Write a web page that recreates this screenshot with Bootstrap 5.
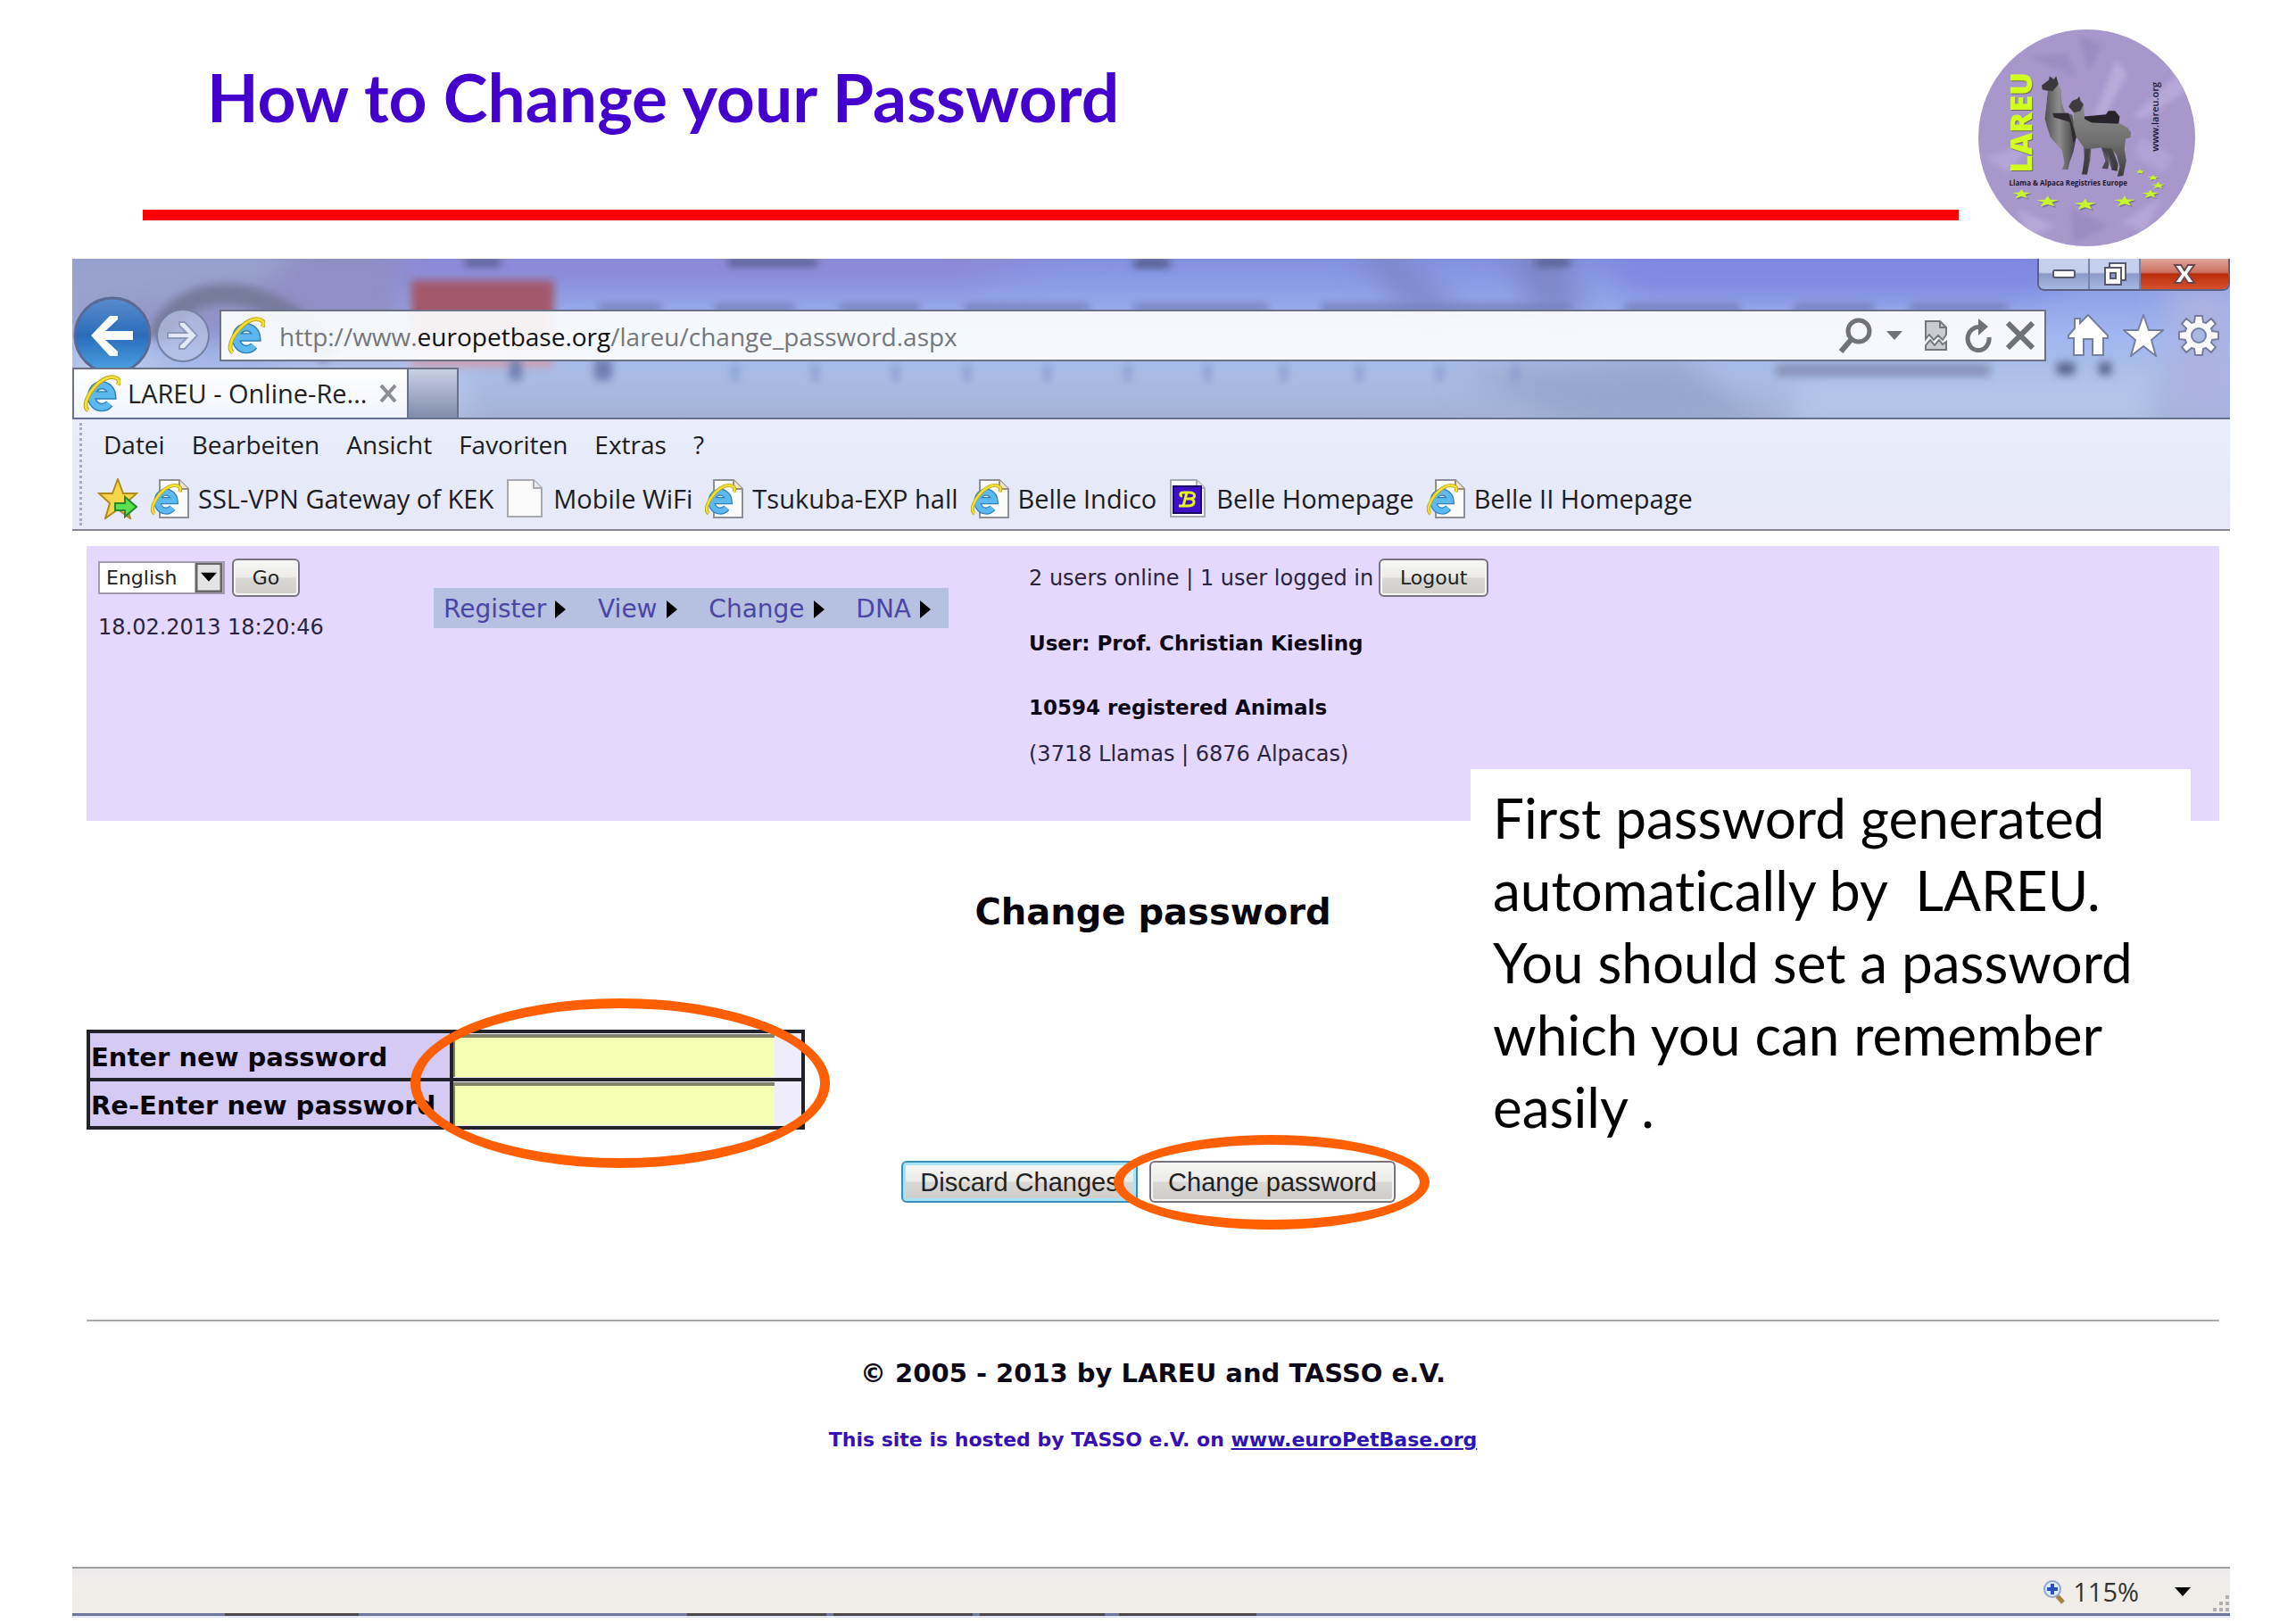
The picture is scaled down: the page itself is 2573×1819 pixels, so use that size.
<!DOCTYPE html>
<html lang="en">
<head>
<meta charset="utf-8">
<meta name="viewport" content="width=device-width, initial-scale=1">
<title>How to Change your Password</title>
<link rel="stylesheet" href="https://cdn.jsdelivr.net/npm/bootstrap@5.3.0/dist/css/bootstrap.min.css">
<style>
  body { background: #fff; color: #0d0818; font-family: "DejaVu Sans", sans-serif; font-size: 22px; line-height: 40px; }
  svg { display: block; flex: none; }

  /* slide heading */
  .slide-head { padding: 33px 113px 14px 160px; gap: 22px; }
  .slide-title { font: 700 75px/90px Lato, sans-serif; color: #4400cc; margin: 30px 0 82px 72px; }
  .slide-rule { height: 12px; background: #ff0000; }

  /* browser window */
  .win { margin: 0 74px 0 81px; font-family: "Open Sans", "Noto Sans", sans-serif; }
  .glass { position: relative; overflow: hidden; border-bottom: 2px solid #66708f; background: #9fb0e4; }
  .glass-art { position: absolute; inset: 0; width: 100%; height: 100%; }
  .glass-part { position: relative; }
  .caption-set { height: 36px; border: 2px solid #5c6080; border-top: 0; border-radius: 0 0 8px 8px; overflow: hidden; }
  .cap-btn { border: 0; border-right: 2px solid #7a82a8; padding: 0; width: 57px; height: 34px; display: grid; place-items: center;
    background: linear-gradient(#c3cfec 0 45%, #8b9ac8 50%, #a8b8e4); }
  .cap-close { width: 98px; border-right: 0; background: linear-gradient(#dfa59c, #cc6f60 45%, #b92c08 50%, #d8502f); }
  .nav-line { height: 86px; padding: 14px 12px 0 1px; }
  .plain-btn { border: 0; background: none; padding: 0; }
  .address { height: 58px; border: 2px solid #6b7288; background: rgba(252,254,255,.92); margin-left: 10px; padding: 0 11px 0 7px; }
  .address-text { border: 0; background: none; font-size: 28px; line-height: 40px; padding-top: 2px; color: #74777c; }
  .address-text b { font-weight: 400; color: #111; }
  .tab-line { height: 56px; }
  .tab-on { width: 377px; background: linear-gradient(#fff, #f0f4ff); border: 2px solid #6b7288; border-bottom: 0; padding: 0 10px 0 10px; font-size: 29px; color: #222; }
  .tab-new { width: 56px; border: 2px solid #6b7288; border-left: 0; border-bottom: 0; background: linear-gradient(#c8d0e4, #808cab); }
  .bars { background: linear-gradient(#e9edfb, #e6eaf8 60%, #e8e8f8); border-bottom: 2px solid #86868f; position: relative; color: #1c1c24; font-size: 28px; }
  .bars::before { content: ""; position: absolute; left: 8px; top: 4px; bottom: 4px; border-left: 3px dotted #a9adb9; }
  .bars a { color: inherit; text-decoration: none; white-space: nowrap; }
  .menu-line { height: 55px; padding-left: 35px; gap: 30px; }
  .fav-line { height: 68px; padding-left: 28px; gap: 13px; font-size: 29px; }
  .fav-line a { display: flex; align-items: center; gap: 10px; }

  /* web site inside the window */
  .site { position: relative; padding: 17px 12px 122px 16px; font-family: "DejaVu Sans", Verdana, sans-serif; }
  .site-head { display: grid; grid-template-columns: 389fr 667fr 1334fr; height: 308px; background: #e4d8ff; color: #2b2440; font-size: 24px; }
  .site-head b { color: #0d0818; font-size: 23px; }
  .old-btn { font: 22px/30px "DejaVu Sans", sans-serif; color: #222; border: 2px solid #77737f; border-radius: 6px; height: 43px; padding: 0;
    background: linear-gradient(#f6f6f4, #ecebe8 48%, #d9d7d3 52%, #cfccca); box-shadow: inset 0 0 0 2px #f6f6f6; }
  .btn-go { width: 76px; }
  .btn-out { width: 123px; margin-left: 6px; }
  .lang-cell { padding-left: 13px; }
  .lang { width: 142px; height: 37px; border: 2px solid #a09bb0; border-radius: 0; padding: 0 0 0 7px; font: 22px/32px "DejaVu Sans", sans-serif; color: #222;
    background: #fff url("data:image/svg+xml,%3Csvg xmlns='http://www.w3.org/2000/svg' viewBox='0 0 32 34'%3E%3Cpath fill='%23e4e4e4' stroke='%23666' stroke-width='3' d='M2 1h28v31H2z'/%3E%3Cpath d='M7 11h18l-9 10z'/%3E%3C/svg%3E") right center / 32px 34px no-repeat; }
  .stamp { margin-top: 14px; }
  .site-nav { height: 45px; margin-top: 47px; width: 577px; background: #b6c0e0; padding: 3px 20px 0 11px; font-size: 28px; }
  .site-nav a { color: #4b46a6; text-decoration: none; display: flex; align-items: center; gap: 10px; }
  .who { padding-top: 14px; white-space: nowrap; }
  .who-name { margin: 32px 0; }
  .who-herd { margin-top: 12px; }
  .page-title { font: 700 40px/60px "DejaVu Sans", sans-serif; color: #08040c; margin: 72px 0 102px; text-align: center; }
  .pw-grid { border-collapse: collapse; position: relative; }
  .pw-grid th, .pw-grid td { border: 4px solid #22222a; height: 54px; padding: 0; }
  .pw-grid th { width: 407px; background: #d4caf4; padding: 3px 0 0 1px; font-size: 29px; line-height: 40px; white-space: nowrap; color: #08040c; }
  .pw-grid td { width: 394px; background: #efecfe; }
  .pw-field { width: 360px; height: 48px; border: 0 solid #80826e; border-width: 4px 0 0 2px; border-radius: 0; background: #f5ffb3; }
  .pw-field:focus { background: #f5ffb3; box-shadow: none; }
  .ring { position: absolute; border: 11px solid #ff5f00; border-radius: 50%; pointer-events: none; }
  .form-wrap { position: relative; }
  .ring-a { left: 363px; top: -35px; width: 470px; height: 190px; }
  .ring-b { left: -40px; top: -29px; width: 354px; height: 106px; }
  .acts { margin-top: 35px; gap: 13px; padding-right: 10px; }
  .act { font: 29px/40px "Liberation Sans", Arial, sans-serif; height: 47px; padding: 0; width: 276px; }
  .act-discard { width: 265px; border-color: #3c8db8; box-shadow: inset 0 0 0 3px #a6e2f8; }
  .foot-rule { height: 2px; background: #a9a9a9; margin-top: 131px; }
  .foot-copy { font-size: 29px; font-weight: 700; margin: 38px 0 35px; text-align: center; }
  .foot-host { font-weight: 700; color: #3610b4; margin: 0; text-align: center; }
  .foot-host a { color: #2b14b4; }
  .note { position: absolute; right: 44px; top: 267px; width: 807px; height: 450px; margin: 0; padding: 14px 25px; background: #fff; color: #000;
    font: 62px/81px Lato, sans-serif; font-variant-ligatures: none; white-space: pre-line; }
  .status { height: 52px; border-top: 2px solid #a09f9e; background: linear-gradient(#ece9ec, #f0edea 30%, #f0ede8); color: #333; font-size: 29px; padding-top: 2px; }
  .status-edge { height: 5px; border-top: 3px solid #6d7698; background: #dfe5f4; padding-left: 171px; }
  .task { height: 3px; margin-top: -3px; background: #4a4648; }
</style>
<script src="https://cdn.jsdelivr.net/npm/bootstrap@5.3.0/dist/js/bootstrap.bundle.min.js"></script>
</head>
<body>

<svg width="0" height="0" class="position-absolute" aria-hidden="true">
  <defs>
    <linearGradient id="blue" x1="0" y1="0" x2="0" y2="1"><stop offset="0" stop-color="#7fd4f8"/><stop offset="1" stop-color="#2b8fd6"/></linearGradient>
    <symbol id="ie" viewBox="0 0 44 46">
      <path d="M11 25h23a12 13 0 1 0-3 10" fill="none" stroke="#2f7fb8" stroke-width="10"/>
      <path d="M11 25h23a12 13 0 1 0-3 10" fill="none" stroke="#5cb8ee" stroke-width="7"/>
      <path d="M6 43C-6 34 24-6 41 6c2 2 1 5 0 7" fill="none" stroke="#b9a514" stroke-width="5"/>
      <path d="M6 43C-6 34 24-6 41 6c2 2 1 5 0 7" fill="none" stroke="#f2de38" stroke-width="3"/>
    </symbol>
    <symbol id="sheet" viewBox="0 0 44 46">
      <path d="M3 2h29l9 9v32H3z" fill="#fbfbfb" stroke="#a9a9b0" stroke-width="2"/>
      <path d="M32 2v9h9" fill="#e8e8e8" stroke="#a9a9b0" stroke-width="2"/>
    </symbol>
    <symbol id="iepage" viewBox="0 0 44 46">
      <path d="M11 2h22l10 10v32H11z" fill="#fbfbfb" stroke="#8f8f98" stroke-width="2"/>
      <path d="M33 2v10h10" fill="#f3e6c8" stroke="#9c8f80" stroke-width="2"/>
      <use href="#ie" x="0" y="5" width="36" height="37"/>
    </symbol>
    <symbol id="eustar" viewBox="-36 -20 72 40" overflow="visible">
      <path d="M2 -16L10 -5 36 -4 15 4 24 18 2 10 -22 18 -12 4 -34 -3 -7 -5z" fill="#5b5a80" opacity=".6" transform="translate(3 3)"/>
      <path d="M0 -18L8 -6 34 -5 13 3 22 16 0 9 -24 16 -14 3 -36 -4 -9 -6z" fill="#c8f52c"/>
    </symbol>
  </defs>
</svg>

<header class="slide-head d-flex align-items-start">
  <div class="flex-grow-1">
    <h1 class="slide-title">How to Change your Password</h1>
    <div class="slide-rule"></div>
  </div>
  <svg width="243" height="243" viewBox="80 38 730 730" role="img" aria-label="LAREU">
    <defs>
      <clipPath id="disc"><circle cx="445" cy="403" r="365"/></clipPath>
      <filter id="soft"><feGaussianBlur stdDeviation="9"/></filter>
      <linearGradient id="wool" x1="0" y1="0" x2="1" y2="0"><stop offset="0" stop-color="#444"/><stop offset=".5" stop-color="#8d8d8d"/><stop offset="1" stop-color="#3c3c3c"/></linearGradient>
      <linearGradient id="wool2" x1="0" y1="0" x2="0" y2="1"><stop offset="0" stop-color="#929292"/><stop offset=".55" stop-color="#707070"/><stop offset="1" stop-color="#3c3c3c"/></linearGradient>
    </defs>
    <circle cx="445" cy="403" r="365" fill="#a797cb"/>
    <g clip-path="url(#disc)"><g filter="url(#soft)">
      <path d="M545 140L470 330 500 340 580 190z" fill="#b9abd9"/>
      <path d="M760 180L600 330 640 340 800 230z" fill="#b6a8d8"/>
      <path d="M250 130L410 200 380 120z" fill="#9c8cc2"/>
      <path d="M420 60L500 90 450 180z" fill="#9a8bc3"/>
      <path d="M100 470L260 420 180 520z" fill="#b3a5d5"/>
      <path d="M630 400L740 470 700 520 600 460z" fill="#b1a3d4"/>
      <path d="M210 640L340 700 250 740z" fill="#b5a7d6"/>
      <path d="M390 640L520 700 400 760z" fill="#9a8bc3"/>
      <path d="M560 690L700 600 640 720z" fill="#b4a6d5"/>
    </g></g>
    <text transform="translate(263 524) rotate(-90)" font-family="Open Sans, sans-serif" font-weight="800" font-size="103" fill="#6c6c50">LAREU</text>
    <text transform="translate(259 521) rotate(-90)" font-family="Open Sans, sans-serif" font-weight="800" font-size="103" fill="#d2ff1e">LAREU</text>
    <text transform="translate(686 449) rotate(-90)" font-family="Open Sans, sans-serif" font-weight="600" font-size="33" fill="#1d1830">www.lareu.org</text>
    <text x="184" y="563" font-family="Open Sans, sans-serif" font-weight="700" font-size="24" fill="#1d1830">Llama &amp; Alpaca Registries Europe</text>
    <path d="M430 332L510 324 518 312 540 312 556 332 552 358 440 362z" fill="#26242a"/>
    <path d="M294 228L318 212 320 196 334 206 342 196 346 218 357 236 362 290 372 318 396 326 410 400 400 450 386 490 382 510 362 510 370 488 362 446 322 400 304 340 314 246 296 240z" fill="url(#wool)"/>
    <path d="M294 226L318 208 320 196 334 206 342 196 350 222 330 246 296 240z" fill="#3a383c"/>
    <path d="M330 320L384 320 410 400 400 420 388 350 334 334z" fill="#2d2b30"/>
    <path d="M384 298L396 278 412 272 420 264 424 278 434 290 438 340 462 352 560 356 584 370 594 386 592 402 576 406 572 440 578 480 568 530 548 534 556 500 546 462 534 446 550 490 548 514 530 512 528 480 510 440 520 490 516 508 496 506 508 480 494 436 460 440 456 480 446 526 428 526 438 480 434 434 410 400 400 360 402 316z" fill="url(#wool2)"/>
    <path d="M384 298L396 278 412 272 420 264 424 278 434 290 424 312 402 318z" fill="#3d3b3f"/>
    <path d="M494 436L530 440 550 490 548 514 530 512 516 470z M440 440L456 440 446 526 430 524z" fill="#38363b" opacity=".7"/>
    <use href="#eustar" x="193" y="574" width="66" height="36"/>
    <use href="#eustar" x="276" y="596" width="76" height="42"/>
    <use href="#eustar" x="402" y="606" width="76" height="42"/>
    <use href="#eustar" x="536" y="596" width="74" height="40"/>
    <use href="#eustar" x="628" y="576" width="64" height="32"/>
    <use href="#eustar" x="660" y="550" width="52" height="26"/>
    <use href="#eustar" x="646" y="526" width="46" height="22"/>
    <use href="#eustar" x="606" y="508" width="38" height="18"/>
  </svg>
</header>

<main class="win">
  <div class="glass">
    <svg class="glass-art" viewBox="0 0 2419 178" preserveAspectRatio="none" aria-hidden="true">
      <defs>
        <linearGradient id="sky" x1="0" y1="0" x2="0" y2="1"><stop offset="0" stop-color="#8390df"/><stop offset=".5" stop-color="#a2b8f1"/><stop offset=".75" stop-color="#a9bbe4"/><stop offset="1" stop-color="#a5b2d4"/></linearGradient>
        <filter id="haze" x="-10%" y="-10%" width="120%" height="120%"><feGaussianBlur stdDeviation="5"/></filter>
        <filter id="haze2" x="-40%" y="-40%" width="180%" height="180%"><feGaussianBlur stdDeviation="16"/></filter>
      </defs>
      <rect width="2419" height="178" fill="url(#sky)"/>
      <g filter="url(#haze2)">
        <path d="M-20-20H372V100H260L-20 80z" fill="#908fc6"/>
        <path d="M-20-20H260L200 40 60 60-20 80z" fill="#98a2cc"/>
        <path d="M370-20H1150L1000 30H370z" fill="#8d8ad8"/>
        <path d="M1430-20L1500 60H1560L1470-20z M1600-20L1640 60H1700L1660-20z" fill="#7d86c8"/>
        <path d="M1700-20H2300L2200 40H1750z" fill="#8088e2"/>
        <path d="M0 90H90V178H0z M240 120H440V178H240z" fill="#b9c7ea"/>
        <path d="M1930 130H2330V190H1930z" fill="#b2c6ea"/>
        <path d="M2350 30H2430V178H2350z" fill="#acb2e2"/>
        <path d="M1550 130L1700 190H1900L1800 110z" fill="#97a6cc"/>
      </g>
      <g filter="url(#haze)">
        <path d="M95 90C120 20 230 20 290 110" fill="none" stroke="#777b9c" stroke-width="24"/>
        <rect x="380" y="24" width="160" height="74" fill="#a3596c"/>
        <rect x="380" y="98" width="160" height="24" fill="#c6a3b8"/>
        <path d="M440 0h40v8h-40z M735 0h100v8h-100z M1190 0h40v10h-40z M1640 0h40v8h-40z" fill="#4f5685"/>
        <path d="M590 50h70v10h-70z M720 50h90v10h-90z M860 50h90v10h-90z M1000 50h140v10h-140z M1190 50h150v10h-150z M1400 50h280v10h-280z M1740 50h130v10h-130z M1930 50h90v10h-90z M2060 50h110v10h-110z" fill="#7681bd"/>
        <path d="M490 112h14v24h-14z M585 112h20v24h-20z" fill="#6e7eb0"/>
        <path d="M1910 118h240v14h-240z" fill="#8792b8"/>
        <path d="M2225 116h20v14h-20z M2272 116h14v14h-14z" fill="#59648e"/>
        <path d="M740 118h6v20h-6z M830 118h6v20h-6z M920 118h6v20h-6z M1000 118h6v20h-6z M1090 118h6v20h-6z M1180 118h6v20h-6z M1270 118h6v20h-6z M1355 118h6v20h-6z M1440 118h6v20h-6z M1530 118h6v20h-6z M1615 118h6v20h-6z" fill="#8296ca"/>
      </g>
    </svg>

    <div class="glass-part d-flex justify-content-end">
      <div class="caption-set d-flex">
        <button class="cap-btn" type="button" aria-label="Minimize"><svg width="26" height="12"><rect x="1" y="2" width="24" height="8" rx="2" fill="#fff" stroke="#555a70" stroke-width="2"/></svg></button>
        <button class="cap-btn" type="button" aria-label="Restore"><svg width="28" height="28"><path d="M8 2h18v19h-5v5H3V7h5z" fill="#fff" stroke="#555a70" stroke-width="2"/><path d="M8 7h13v14" fill="none" stroke="#555a70" stroke-width="2"/><rect x="9" y="13" width="6" height="6" fill="#8fa0d0" stroke="#555a70" stroke-width="2"/></svg></button>
        <button class="cap-btn cap-close" type="button" aria-label="Close"><svg width="26" height="26"><path d="M2 3h7l4 6 4-6h7l-7 10 7 10h-7l-4-6-4 6H2l7-10z" fill="#fff" stroke="#6a4a50" stroke-width="2"/></svg></button>
      </div>
    </div>

    <div class="glass-part nav-line d-flex align-items-center">
      <button class="plain-btn" type="button" aria-label="Back"><svg width="88" height="88"><defs><linearGradient id="bk" x1="0" y1="0" x2="0" y2="1"><stop offset="0" stop-color="#5a8ccc"/><stop offset=".5" stop-color="#2a6cba"/><stop offset="1" stop-color="#4da4e4"/></linearGradient></defs><circle cx="44" cy="44" r="42" fill="url(#bk)" stroke="#5a6a94" stroke-width="3"/><path d="M20 44L41 22h9v4L36 39h31v10H36l14 13v5h-9z" fill="#fff"/></svg></button>
      <button class="plain-btn ms-1" type="button" aria-label="Forward"><svg width="62" height="62"><circle cx="31" cy="31" r="29" fill="#b9c5e6" fill-opacity=".7" stroke="#7480a4" stroke-width="2"/><path d="M47 31L33 16h-6v4l8 8H14v6h21l-8 8v4h6z" fill="#e2e9f8" stroke="#8c98ba" stroke-width="2"/></svg></button>
      <div class="address d-flex align-items-center flex-grow-1">
        <svg width="42" height="46"><use href="#ie"/></svg>
        <div class="address-text flex-grow-1 ps-3">http://www.<b>europetbase.org</b>/lareu/change_password.aspx</div>
        <button class="plain-btn" type="button" aria-label="Search"><svg width="38" height="40"><circle cx="23" cy="15" r="12" fill="none" stroke="#6f7377" stroke-width="5"/><path d="M15 24L3 38" stroke="#6f7377" stroke-width="6"/></svg></button>
        <button class="plain-btn mx-3" type="button" aria-label="Search options"><svg width="18" height="10"><path d="M0 0h18l-9 10z" fill="#6f7377"/></svg></button>
        <button class="plain-btn ms-2" type="button" aria-label="Compatibility view"><svg width="28" height="34"><path d="M2 1h16l7 7v8l-4 6-5-5-5 5-5-6-4 5z M2 33v-5l5-6 5 6 5-6 4 5 4-3v9z" fill="#c9ccd0" stroke="#74787c" stroke-width="2"/><path d="M18 1v7h7" fill="none" stroke="#74787c" stroke-width="2"/></svg></button>
        <button class="plain-btn mx-3" type="button" aria-label="Refresh"><svg width="32" height="38"><path d="M20 10a12 13 0 1 0 9 11" fill="none" stroke="#6f7377" stroke-width="5"/><path d="M17 0l11 9-11 10z" fill="#6f7377"/></svg></button>
        <button class="plain-btn" type="button" aria-label="Stop"><svg width="32" height="32"><path d="M2 2l28 28M30 2L2 30" stroke="#6f7377" stroke-width="6"/></svg></button>
      </div>
      <button class="plain-btn ms-4" type="button" aria-label="Home"><svg width="46" height="48"><path d="M23 1L45 24v3h-5v19H28V28H18v18H7V27H1v-3L8 16V5h6v5z" fill="#fff" stroke="#76809e" stroke-width="2"/></svg></button>
      <button class="plain-btn mx-3" type="button" aria-label="Favorites"><svg width="46" height="48"><path d="M23 1l6 17h16L32 29l5 18-14-11L9 47l5-18L1 18h16z" fill="#fff" stroke="#76809e" stroke-width="2"/></svg></button>
      <button class="plain-btn" type="button" aria-label="Tools"><svg width="46" height="48" viewBox="-23 -24 46 48"><g fill="#fff" stroke="#76809e" stroke-width="2"><path d="M-5-15l1-7h8l1 7a16 16 0 0 1 3 1l6-5 5 6-5 5a16 16 0 0 1 1 3l7 1v8l-7 1a16 16 0 0 1-1 3l5 5-5 6-6-5a16 16 0 0 1-3 1l-1 7h-8l-1-7a16 16 0 0 1-3-1l-6 5-5-6 5-5a16 16 0 0 1-1-3l-7-1v-8l7-1a16 16 0 0 1 1-3l-5-5 5-6 6 5z"/><circle r="8" fill="#a9b6e2"/></g></svg></button>
    </div>

    <div class="glass-part tab-line d-flex">
      <div class="tab-on d-flex align-items-center">
        <svg width="42" height="46"><use href="#ie"/></svg>
        <span class="flex-grow-1 ps-2 text-nowrap">LAREU - Online-Re...</span>
        <button class="plain-btn" type="button" aria-label="Close tab"><svg width="22" height="20"><path d="M3 1l16 18M19 1L3 19" stroke="#8d8d93" stroke-width="4"/></svg></button>
      </div>
      <button class="tab-new p-0" type="button" aria-label="New tab"></button>
    </div>
  </div>

  <div class="bars">
    <nav class="menu-line d-flex align-items-center" aria-label="Menu">
      <a href="#">Datei</a><a href="#">Bearbeiten</a><a href="#">Ansicht</a><a href="#">Favoriten</a><a href="#">Extras</a><a href="#">?</a>
    </nav>
    <nav class="fav-line d-flex align-items-center" aria-label="Favorites bar">
      <a href="#" aria-label="Add to favorites"><svg width="46" height="46"><path d="M23 1l6 16h15L32 28l5 17-14-10L9 45l5-17L2 17h15z" fill="#f6d648" stroke="#b08a20" stroke-width="2"/><path d="M20 28h11v-7l13 11-13 11v-7H20z" fill="#59e04e" stroke="#26882a" stroke-width="2"/></svg></a>
      <a href="#"><svg width="44" height="46"><use href="#iepage"/></svg>SSL-VPN Gateway of KEK</a>
      <a href="#"><svg width="44" height="46"><use href="#sheet"/></svg>Mobile WiFi</a>
      <a href="#"><svg width="44" height="46"><use href="#iepage"/></svg>Tsukuba-EXP hall</a>
      <a href="#"><svg width="44" height="46"><use href="#iepage"/></svg>Belle Indico</a>
      <a href="#"><svg width="44" height="46"><use href="#sheet"/><rect x="6" y="9" width="31" height="30" fill="#3f10c8" stroke="#1c0a60" stroke-width="2"/><path d="M12 31h10c9 0 9-8 2-8 8 0 7-7 0-7h-7c-4 0-4 4-1 4M21 16l-4 15M20 23h5" fill="none" stroke="#e6f01e" stroke-width="3"/></svg>Belle Homepage</a>
      <a href="#"><svg width="44" height="46"><use href="#iepage"/></svg>Belle II Homepage</a>
    </nav>
  </div>

  <div class="site">
    <section class="site-head">
      <div class="lang-cell">
        <div class="d-flex align-items-center who">
          <select class="form-select lang" aria-label="Language"><option>English</option></select>
          <button class="btn old-btn btn-go ms-2" type="button">Go</button>
        </div>
        <div class="stamp">18.02.2013 18:20:46</div>
      </div>
      <div>
        <nav class="site-nav d-flex align-items-center justify-content-between" aria-label="Site">
          <a href="#">Register<svg width="12" height="20"><path d="M0 0l12 10L0 20z"/></svg></a>
          <a href="#">View<svg width="12" height="20"><path d="M0 0l12 10L0 20z"/></svg></a>
          <a href="#">Change<svg width="12" height="20"><path d="M0 0l12 10L0 20z"/></svg></a>
          <a href="#">DNA<svg width="12" height="20"><path d="M0 0l12 10L0 20z"/></svg></a>
        </nav>
      </div>
      <div class="who">
        <div class="d-flex align-items-center">2 users online | 1 user logged in<button class="btn old-btn btn-out" type="button">Logout</button></div>
        <div class="who-name"><b>User: Prof. Christian Kiesling</b></div>
        <div><b>10594 registered Animals</b></div>
        <div class="who-herd">(3718 Llamas | 6876 Alpacas)</div>
      </div>
    </section>

    <h2 class="page-title">Change password</h2>

    <form>
      <div class="form-wrap">
        <table class="pw-grid">
          <tr><th scope="row"><label for="pw1">Enter new password</label></th><td><input class="form-control pw-field" id="pw1" type="password"></td></tr>
          <tr><th scope="row"><label for="pw2">Re-Enter new password</label></th><td><input class="form-control pw-field" id="pw2" type="password"></td></tr>
        </table>
        <div class="ring ring-a"></div>
      </div>
      <div class="acts d-flex justify-content-center">
        <button class="btn old-btn act act-discard" type="reset">Discard Changes</button>
        <div class="position-relative">
          <button class="btn old-btn act" type="button">Change password</button>
          <div class="ring ring-b"></div>
        </div>
      </div>
    </form>

    <div class="foot-rule"></div>
    <p class="foot-copy">© 2005 - 2013 by LAREU and TASSO e.V.</p>
    <p class="foot-host">This site is hosted by TASSO e.V. on <a href="#">www.euroPetBase.org</a></p>

    <p class="note">First password generated
automatically by&nbsp; LAREU.
You should set a password
which you can remember
easily .</p>
  </div>

  <div class="status d-flex align-items-center justify-content-end">
    <svg width="26" height="28"><path d="M15 17l8 9" stroke="#a5834c" stroke-width="5"/><circle cx="11" cy="11" r="9" fill="#dfe9fb" stroke="#8fa6d4" stroke-width="2"/><path d="M11 5v12M5 11h12" stroke="#2a50c4" stroke-width="4"/></svg>
    <span class="ps-2">115%</span>
    <svg class="ms-4 ps-3 me-4" width="34" height="10"><path d="M0 0h18l-9 10z"/></svg>
    <svg width="20" height="22" class="align-self-end"><path d="M1 18h4M8 18h4M15 18h4M8 11h4M15 11h4M15 4h4" stroke="#b0aeb0" stroke-width="4"/></svg>
  </div>
  <div class="status-edge d-flex gap-2">
    <div class="task" style="width:150px"></div><div style="width:352px"></div>
    <div class="task" style="width:156px"></div><div class="task" style="width:156px"></div><div class="task" style="width:140px"></div><div></div><div class="task" style="width:154px"></div>
  </div>
</main>
</body>
</html>
